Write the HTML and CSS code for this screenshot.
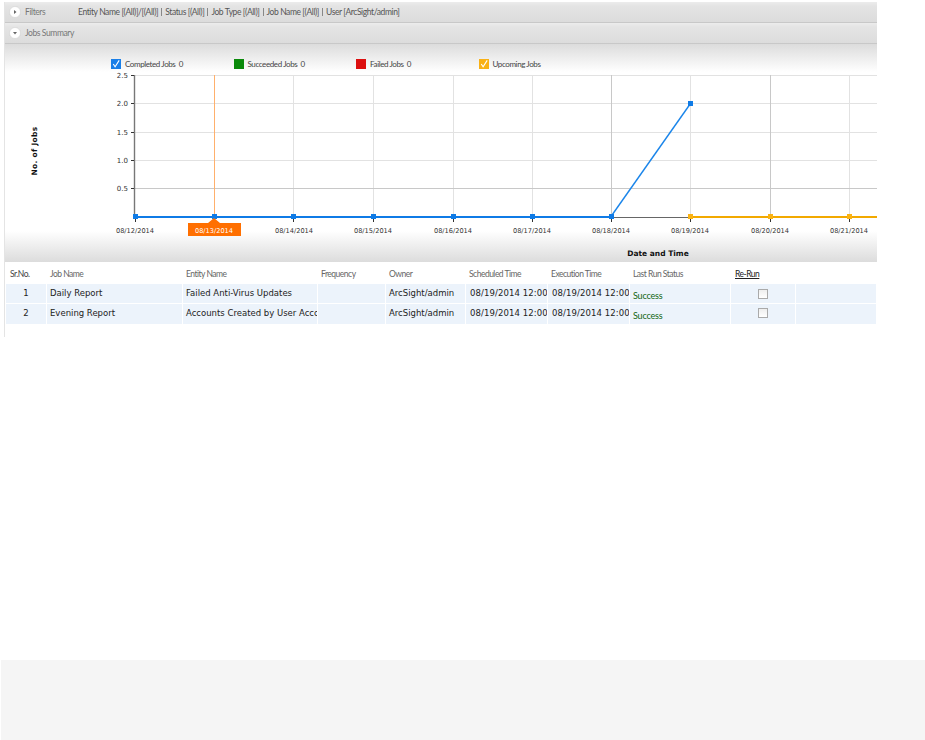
FILE: index.html
```html
<!DOCTYPE html>
<html lang="en">
<head>
    <meta charset="UTF-8">
    <title>Jobs Summary</title>
    <link rel="stylesheet" href="styles.css">
</head>
<body>
    <div class="panel">
        <div class="bar bar-filters">
            <svg class="toggle" width="12" height="12" viewBox="0 0 12 12"><circle cx="6" cy="6" r="5.5" fill="#fff" stroke="#ccc" stroke-width="0.5"/><path d="M5 4l2.5 2L5 8z" fill="#666"/></svg>
            <span class="bar-title">Filters</span>
            <div class="crumbs">
                <span>Entity Name [(All)]/[(All)]</span>
                <span>Status [(All)]</span>
                <span>Job Type [(All)]</span>
                <span>Job Name [(All)]</span>
                <span>User [ArcSight/admin]</span>
            </div>
        </div>
        <div class="bar">
            <svg class="toggle" width="12" height="12" viewBox="0 0 12 12"><circle cx="6" cy="6" r="5.5" fill="#fff" stroke="#ccc" stroke-width="0.5"/><path d="M4 5l2 2.5L8 5z" fill="#666"/></svg>
            <span class="bar-title">Jobs Summary</span>
        </div>

        <div class="chart-area">
            <div class="legend">
                <div class="legend-item"><span class="swatch blue"><svg width="11" height="11" viewBox="0 0 11 11"><path d="M2.5 5.5l2 3L9 1.5" fill="none" stroke="#fff" stroke-width="1.2"/></svg></span>Completed Jobs&nbsp; 0</div>
                <div class="legend-item"><span class="swatch green"></span>Succeeded Jobs&nbsp; 0</div>
                <div class="legend-item"><span class="swatch red"></span>Failed Jobs&nbsp; 0</div>
                <div class="legend-item"><span class="swatch yellow"><svg width="11" height="11" viewBox="0 0 11 11"><path d="M2.5 5.5l2 3L9 1.5" fill="none" stroke="#fff" stroke-width="1.2"/></svg></span>Upcoming Jobs</div>
            </div>
            <svg class="chart" width="872" height="190" viewBox="5 72 872 190">
                <g class="grid-light">
                    <path d="M134 75.5H877M134 103.5H877M134 132.5H877M134 160.5H877"/>
                    <path d="M293.5 75V217M373.5 75V217M453.5 75V217M532.5 75V217M690.5 75V217M849.5 75V217"/>
                </g>
                <g class="grid-dark">
                    <path d="M134 188.5H877"/>
                    <path d="M611.5 75V217M770.5 75V217"/>
                </g>
                <path class="focus-line" d="M214.5 75V217"/>
                <path class="axis-y" d="M134.5 75V218"/>
                <path class="ticks" d="M131 75.5H134M131 103.5H134M131 132.5H134M131 160.5H134M131 188.5H134"/>
                <path class="axis-x" d="M134 217.5H877"/>
                <path class="ticks" d="M135.5 218v4M293.5 218v4M373.5 218v4M453.5 218v4M532.5 218v4M611.5 218v4M690.5 218v4M770.5 218v4M849.5 218v4"/>

                <g class="y-labels">
                    <text x="128" y="78">2.5</text>
                    <text x="128" y="106">2.0</text>
                    <text x="128" y="135">1.5</text>
                    <text x="128" y="163">1.0</text>
                    <text x="128" y="191">0.5</text>
                </g>
                <text class="axis-title title-y" transform="translate(37 151) rotate(-90)">No. of Jobs</text>
                <text class="axis-title" x="658" y="256">Date and Time</text>

                <path class="line-blue" d="M135 217H611"/>
                <path class="line-rise" d="M611 216.5L690.5 103.5"/>
                <path class="line-yellow" d="M690.5 217H877"/>
                <g class="dots-blue">
                    <rect x="133" y="214" width="5" height="5"/>
                    <rect x="212" y="214" width="5" height="5"/>
                    <rect x="291" y="214" width="5" height="5"/>
                    <rect x="371" y="214" width="5" height="5"/>
                    <rect x="451" y="214" width="5" height="5"/>
                    <rect x="530" y="214" width="5" height="5"/>
                    <rect x="609" y="214" width="5" height="5"/>
                    <rect x="688" y="101" width="5" height="5"/>
                </g>
                <g class="dots-yellow">
                    <rect x="688" y="214" width="5" height="5"/>
                    <rect x="768" y="214" width="5" height="5"/>
                    <rect x="847" y="214" width="5" height="5"/>
                </g>

                <g class="x-labels">
                    <text x="135" y="232.5">08/12/2014</text>
                    <text x="294" y="232.5">08/14/2014</text>
                    <text x="373" y="232.5">08/15/2014</text>
                    <text x="453" y="232.5">08/16/2014</text>
                    <text x="532" y="232.5">08/17/2014</text>
                    <text x="611" y="232.5">08/18/2014</text>
                    <text x="690" y="232.5">08/19/2014</text>
                    <text x="770" y="232.5">08/20/2014</text>
                    <text x="849" y="232.5">08/21/2014</text>
                </g>
                <path class="flag" d="M188 223H208L214 218L220 223H241V236H188z"/>
                <text class="flag-text" x="214" y="232.5">08/13/2014</text>
            </svg>
        </div>

        <table class="jobs">
            <colgroup>
                <col class="c-no"><col class="c-name"><col class="c-entity"><col class="c-freq"><col class="c-owner"><col class="c-time"><col class="c-time"><col class="c-status"><col class="c-rerun"><col>
            </colgroup>
            <thead>
                <tr>
                    <th>Sr.No.</th>
                    <th>Job Name</th>
                    <th>Entity Name</th>
                    <th>Frequency</th>
                    <th>Owner</th>
                    <th>Scheduled Time</th>
                    <th>Execution Time</th>
                    <th>Last Run Status</th>
                    <th class="rerun-head"><u>Re-Run</u></th>
                    <th></th>
                </tr>
            </thead>
            <tbody>
                <tr>
                    <td class="num">1</td>
                    <td>Daily Report</td>
                    <td>Failed Anti-Virus Updates</td>
                    <td></td>
                    <td>ArcSight/admin</td>
                    <td class="when">08/19/2014 12:00</td>
                    <td class="when">08/19/2014 12:00</td>
                    <td class="status">Success</td>
                    <td class="check"><input type="checkbox"></td>
                    <td></td>
                </tr>
                <tr>
                    <td class="num">2</td>
                    <td>Evening Report</td>
                    <td>Accounts Created by User Acco</td>
                    <td></td>
                    <td>ArcSight/admin</td>
                    <td class="when">08/19/2014 12:00</td>
                    <td class="when">08/19/2014 12:00</td>
                    <td class="status">Success</td>
                    <td class="check"><input type="checkbox"></td>
                    <td></td>
                </tr>
            </tbody>
        </table>
    </div>

    <div class="footer"></div>
</body>
</html>
```

FILE: styles.css
```css
* {
    box-sizing: border-box;
}
html, body {
    height: 100%;
}
body {
    margin: 0;
    display: flex;
    flex-direction: column;
    background: white;
    font-family: "DejaVu Sans", Verdana, sans-serif;
}
.panel {
    width: 873px;
    height: 335px;
    margin: 2px 0 0 4px;
    border-left: 1px solid #e4e4e4;
}
.bar {
    display: flex;
    align-items: center;
    height: 21px;
    padding-left: 4px;
    background: linear-gradient(#ececec, #e4e4e4 20%, #dcdcdc);
    border-bottom: 1px solid #c8c8c8;
    font-family: Lato, "Liberation Sans", sans-serif;
    color: #777;
    font-size: 8.5px;
    letter-spacing: -0.4px;
}
.toggle {
    flex: none;
    margin-right: 4px;
}
.bar-title {
    width: 53px;
    flex: none;
    white-space: nowrap;
}
.crumbs {
    display: flex;
    color: #555;
}
.crumbs span {
    padding: 0 3px 0 3px;
    border-left: 1px solid #888;
    line-height: 8px;
}
.crumbs span:first-child {
    padding-left: 0;
    border-left: none;
}
.chart-area {
    height: 218px;
    padding-top: 14px;
    background: linear-gradient(#dcdcdc, #fff 28px, #fff 187px, #dcdcdc);
}
.legend {
    display: flex;
    height: 14px;
    padding-left: 106px;
}
.legend-item {
    display: flex;
    align-items: center;
    width: 122.5px;
    height: 11px;
    font-family: Lato, "Liberation Sans", sans-serif;
    font-size: 8px;
    letter-spacing: -0.4px;
    color: #444;
}
.swatch {
    display: block;
    width: 10px;
    height: 10px;
    margin-right: 4px;
    flex: none;
}
.swatch svg {
    display: block;
    width: 10px;
    height: 10px;
}
.blue { background: #1a7fe8; }
.green { background: #0a8a0a; }
.red { background: #dc0f0f; }
.yellow { background: #f9b116; }
.chart {
    display: block;
}
.chart path {
    fill: none;
}
.grid-light path {
    stroke: #e2e2e2;
}
.grid-dark path {
    stroke: #c8c8c8;
}
.focus-line {
    stroke: #ffb06c;
}
.axis-y {
    stroke: #777;
    stroke-width: 1.4;
}
.axis-x {
    stroke: #666;
}
.ticks {
    stroke: #333;
}
.line-blue {
    stroke: #0f7be6;
    stroke-width: 2;
}
.line-rise {
    stroke: #1a85ea;
    stroke-width: 1.4;
}
.line-yellow {
    stroke: #f2a900;
    stroke-width: 2;
}
.dots-blue rect {
    fill: #0f7be6;
}
.dots-yellow rect {
    fill: #fbb313;
}
.chart text {
    font-size: 6.6px;
    fill: #333;
    text-anchor: middle;
}
.chart .y-labels text {
    font-size: 7px;
    text-anchor: end;
}
.chart .axis-title {
    font-size: 7.5px;
    font-weight: bold;
    fill: #111;
}
.chart .title-y {
    letter-spacing: 0.3px;
}
.chart .flag {
    fill: #ff6f00;
}
.chart .flag-text {
    fill: #fff;
}
.jobs {
    width: 871px;
    table-layout: fixed;
    border-collapse: separate;
    border-spacing: 0;
    margin-left: 1px;
}
.c-no { width: 41px; }
.c-name { width: 136px; }
.c-entity { width: 135px; }
.c-freq { width: 68px; }
.c-owner { width: 80px; }
.c-time { width: 82px; }
.c-status { width: 101px; }
.c-rerun { width: 65px; }
.jobs th {
    height: 22px;
    padding: 1px 0 0 3px;
    text-align: left;
    font-family: Lato, "Liberation Sans", sans-serif;
    font-size: 8.5px;
    letter-spacing: -0.5px;
    font-weight: normal;
    color: #666;
}
.jobs th:first-child {
    padding-left: 4px;
    color: #444;
}
.jobs .rerun-head {
    padding-left: 4px;
    color: #222;
}
.jobs td {
    height: 20px;
    padding: 0 0 1px 3px;
    background: #ecf3fb;
    border-right: 1px solid white;
    border-bottom: 1px solid white;
    font-size: 8.5px;
    color: #222;
    white-space: nowrap;
    overflow: hidden;
}
.jobs tr:last-child td {
    padding-bottom: 2px;
    border-bottom: none;
}
.jobs .num {
    padding-left: 0;
    text-align: center;
}
.jobs .when {
    padding-left: 4px;
    letter-spacing: 0.1px;
}
.jobs .status {
    padding-top: 4px;
    font-family: Lato, "Liberation Sans", sans-serif;
    font-size: 9px;
    letter-spacing: -0.2px;
    color: #116611;
}
.jobs .check {
    text-align: center;
    padding: 0;
}
.check input {
    appearance: none;
    width: 10px;
    height: 10px;
    margin: 0;
    vertical-align: middle;
    border: 1px solid #aaa;
    background: linear-gradient(#eee, #fff);
}
.footer {
    height: 80px;
    margin-top: auto;
    margin-left: 1px;
    background: #f5f5f5;
}
```
